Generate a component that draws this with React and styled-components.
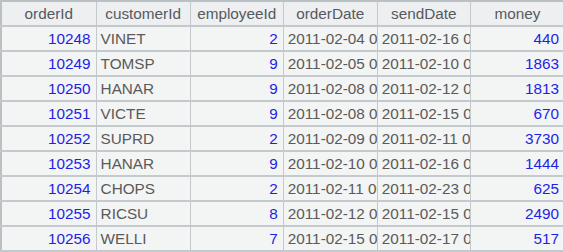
import styled, { createGlobalStyle } from 'styled-components';

const columns = [
  { key: 'orderId', width: 95, align: 'right', numeric: true },
  { key: 'customerId', width: 94, align: 'left' },
  { key: 'employeeId', width: 93, align: 'right', numeric: true },
  { key: 'orderDate', width: 94, align: 'left' },
  { key: 'sendDate', width: 93, align: 'left' },
  { key: 'money', width: 94, align: 'right', numeric: true },
];

const rows = [
  [10248, 'VINET', 2, '2011-02-04 00:00:00', '2011-02-16 00:00:00', 440],
  [10249, 'TOMSP', 9, '2011-02-05 00:00:00', '2011-02-10 00:00:00', 1863],
  [10250, 'HANAR', 9, '2011-02-08 00:00:00', '2011-02-12 00:00:00', 1813],
  [10251, 'VICTE', 9, '2011-02-08 00:00:00', '2011-02-15 00:00:00', 670],
  [10252, 'SUPRD', 2, '2011-02-09 00:00:00', '2011-02-11 00:00:00', 3730],
  [10253, 'HANAR', 9, '2011-02-10 00:00:00', '2011-02-16 00:00:00', 1444],
  [10254, 'CHOPS', 2, '2011-02-11 00:00:00', '2011-02-23 00:00:00', 625],
  [10255, 'RICSU', 8, '2011-02-12 00:00:00', '2011-02-15 00:00:00', 2490],
  [10256, 'WELLI', 7, '2011-02-15 00:00:00', '2011-02-17 00:00:00', 517],
];

function App() {
  return (
    <>
      <GlobalStyle />
      <Grid>
        <colgroup>
          {columns.map((col) => (
            <col key={col.key} style={{ width: col.width }} />
          ))}
        </colgroup>
        <thead>
          <tr>
            {columns.map((col) => (
              <HeadCell key={col.key}>{col.key}</HeadCell>
            ))}
          </tr>
        </thead>
        <tbody>
          {rows.map((row) => (
            <tr key={row[0]}>
              {row.map((value, i) => (
                <Cell
                  key={columns[i].key}
                  $align={columns[i].align}
                  $numeric={columns[i].numeric}
                >
                  {value}
                </Cell>
              ))}
            </tr>
          ))}
        </tbody>
      </Grid>
    </>
  );
}

const GlobalStyle = createGlobalStyle`
  html, body {
    margin: 0;
    padding: 0;
    background: #f3f4f4;
  }
`;

const Grid = styled.table`
  width: 565px;
  table-layout: fixed;
  border-collapse: collapse;
  border-left: 2px solid #b9c1c5;
  border-top: 2px solid #b9c1c5;
  font-family: 'Liberation Sans', Arial, sans-serif;
  font-size: 15.3px;
`;

const HeadCell = styled.th`
  height: 23px;
  padding: 0 4px;
  background: #edeff0;
  border-right: 1px solid #c3c9cc;
  border-bottom: 2px solid #c3c9cc;
  color: #555a5e;
  font-weight: normal;
  text-align: center;
  white-space: nowrap;
  overflow: hidden;
`;

const Cell = styled.td`
  height: 23px;
  padding: ${({ $align }) => ($align === 'right' ? '0 5px 0 4px' : '0 0 0 4px')};
  background: #f3f4f4;
  border-right: 1px solid #c3c9cc;
  border-bottom: 2px solid #c3c9cc;
  color: ${({ $numeric }) => ($numeric ? '#1f1fe6' : '#5a5a5a')};
  text-align: ${({ $align }) => $align};
  white-space: nowrap;
  overflow: hidden;
  text-overflow: clip;
`;

export default App;
